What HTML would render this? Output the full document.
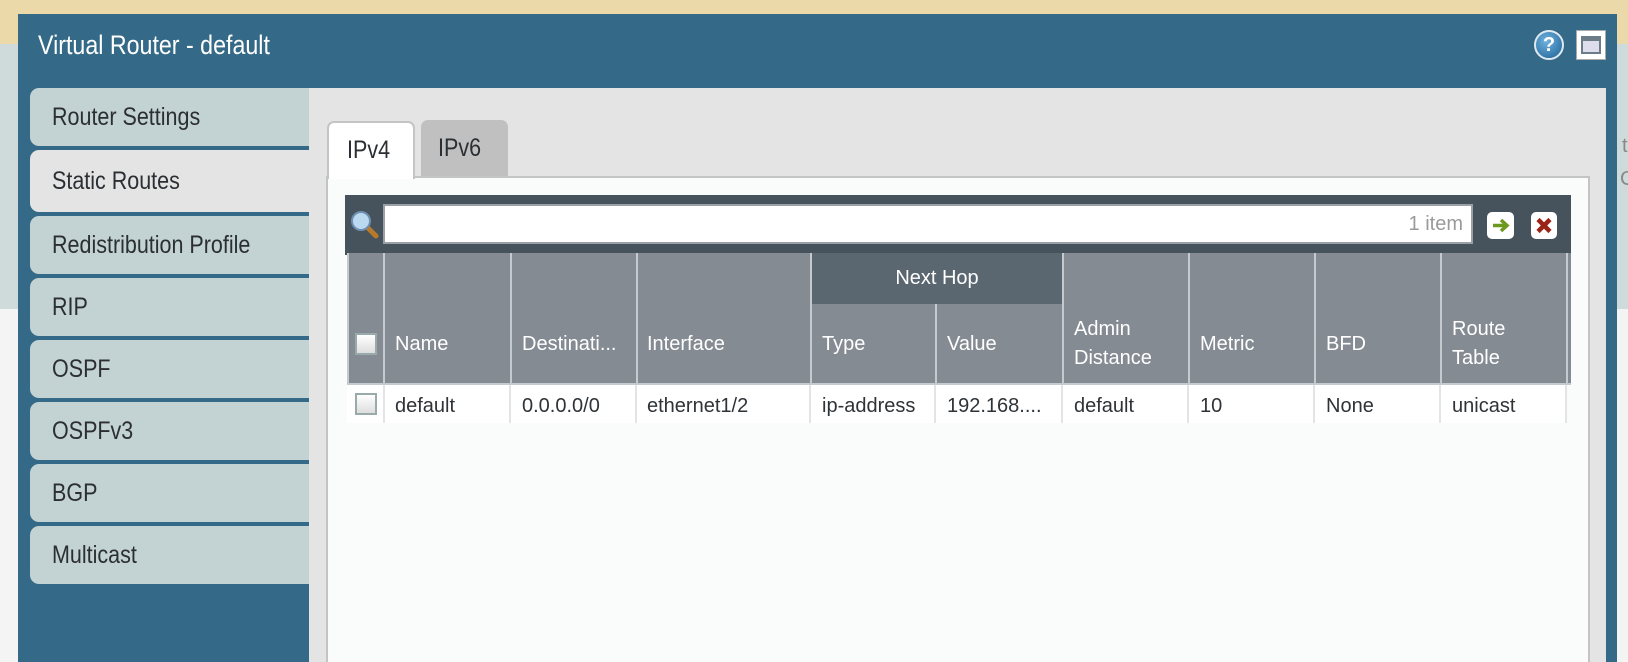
<!DOCTYPE html>
<html><head><meta charset="utf-8"><style>
*{margin:0;padding:0;box-sizing:border-box}
html,body{width:1628px;height:662px;overflow:hidden}
body{position:relative;background:#f4f4f4;font-family:"Liberation Sans",sans-serif}
.abs{position:absolute}
.tab{position:absolute;left:30px;width:279px;background:#c3d2d3;border-radius:9px 0 0 9px;color:#2b2f33;font-size:25px;padding-left:22px;display:flex;align-items:center}
.tab span{display:inline-block;transform:scaleX(.86);transform-origin:left center}
.hc{position:absolute;color:#fff;font-size:20px;line-height:30px}
.sep{position:absolute;width:2px;background:#c5cacf}
.rc{position:absolute;top:391px;color:#2e3338;font-size:20px;line-height:30px}
.rsep{position:absolute;top:385px;height:38px;width:2px;background:#e2e4e6}
</style></head><body>
<div class="abs" style="left:0;top:0;width:1628px;height:44px;background:#ecd9a9"></div>
<div class="abs" style="left:0;top:44px;width:1628px;height:265px;background:#cfdadb"></div>
<div class="abs" style="left:1622px;top:135px;color:#888;font-size:20px">t:</div>
<div class="abs" style="left:1620px;top:168px;color:#888;font-size:20px">Co</div>

<div class="abs" style="left:18px;top:14px;width:1599px;height:648px;background:#346a87"></div>
<div class="abs" style="left:38px;top:30px;color:#fff;font-size:27px;transform:scaleX(.86);transform-origin:left">Virtual Router - default</div>
<div class="abs" style="left:1534px;top:30px;width:30px;height:30px;border-radius:50%;background:radial-gradient(circle at 40% 35%,#6fb3e0,#1c5f94);border:2px solid #dfe9f0;color:#fff;font-weight:bold;font-size:20px;text-align:center;line-height:26px">?</div>
<div class="abs" style="left:1576px;top:30px;width:30px;height:30px;background:#fff;border:1px solid #aaa;padding:5px 4px"><div style="width:100%;height:100%;border:2px solid #6b7b88;border-top-width:5px;background:#dde"></div></div>

<div class="abs" style="left:309px;top:88px;width:1297px;height:574px;background:#e4e4e4"></div>

<div class="tab" style="top:88px;height:58px"><span>Router Settings</span></div>
<div class="tab" style="top:150px;height:62px;background:#e4e4e4"><span>Static Routes</span></div>
<div class="tab" style="top:216px;height:58px"><span>Redistribution Profile</span></div>
<div class="tab" style="top:278px;height:58px"><span>RIP</span></div>
<div class="tab" style="top:340px;height:58px"><span>OSPF</span></div>
<div class="tab" style="top:402px;height:58px"><span>OSPFv3</span></div>
<div class="tab" style="top:464px;height:58px"><span>BGP</span></div>
<div class="tab" style="top:526px;height:58px"><span>Multicast</span></div>

<div class="abs" style="left:326px;top:176px;width:1264px;height:486px;background:#fafbfb;border:2px solid #c4c4c4;border-bottom:none"></div>
<div class="abs" style="left:327px;top:121px;width:88px;height:58px;background:#fff;border:2px solid #c4c4c4;border-bottom:none;border-radius:7px 7px 0 0;font-size:25px;color:#2b2f33;padding:13px 0 0 18px"><span style="display:inline-block;transform:scaleX(.86);transform-origin:left">IPv4</span></div>
<div class="abs" style="left:421px;top:120px;width:87px;height:56px;background:#c0c0c0;border-radius:7px 7px 0 0;font-size:25px;color:#2b2f33;padding:14px 0 0 17px"><span style="display:inline-block;transform:scaleX(.86);transform-origin:left">IPv6</span></div>

<div class="abs" style="left:345px;top:195px;width:1226px;height:60px;background:#46535d"></div>
<svg class="abs" style="left:350px;top:210px" width="30" height="30"><line x1="16" y1="16" x2="26" y2="26" stroke="#b77a2a" stroke-width="5" stroke-linecap="round"/><circle cx="11" cy="11" r="9" fill="#bcd9f2" stroke="#6e8fb0" stroke-width="2"/></svg>
<div class="abs" style="left:383px;top:204px;width:1090px;height:40px;background:#fff;border:2px solid #9aa0a6;text-align:right;padding-right:8px;color:#9a9a9a;font-size:20px;line-height:36px">1 item</div>
<div class="abs" style="left:1487px;top:212px;width:27px;height:27px;background:#fff;border-radius:5px"></div>
<svg class="abs" style="left:1487px;top:212px" width="27" height="27"><path d="M6 13.5H19M14 8l6 5.5-6 5.5" stroke="#6d9a1e" stroke-width="3.5" fill="none"/></svg>
<div class="abs" style="left:1531px;top:212px;width:26px;height:27px;background:#fff;border-radius:5px"></div>
<svg class="abs" style="left:1531px;top:212px" width="26" height="27"><path d="M7 7.5l12 12M19 7.5l-12 12" stroke="#9a2418" stroke-width="4.5"/></svg>

<div class="abs" style="left:347px;top:253px;width:1224px;height:132px;background:#858b92"></div>
<div class="abs" style="left:811px;top:253px;width:252px;height:51px;background:#5a6670"></div>
<div class="hc" style="left:811px;top:263px;width:252px;text-align:center">Next Hop</div>
<div class="sep" style="left:347px;top:253px;height:132px"></div>
<div class="sep" style="left:383px;top:253px;height:132px"></div>
<div class="sep" style="left:510px;top:253px;height:132px"></div>
<div class="sep" style="left:636px;top:253px;height:132px"></div>
<div class="sep" style="left:810px;top:253px;height:132px"></div>
<div class="sep" style="left:935px;top:304px;height:81px"></div>
<div class="sep" style="left:1062px;top:253px;height:132px"></div>
<div class="sep" style="left:1188px;top:253px;height:132px"></div>
<div class="sep" style="left:1314px;top:253px;height:132px"></div>
<div class="sep" style="left:1440px;top:253px;height:132px"></div>
<div class="sep" style="left:1566px;top:253px;height:132px"></div>
<div class="abs" style="left:347px;top:383px;width:1224px;height:2px;background:#c5cacf"></div>

<div class="abs" style="left:355px;top:333px;width:22px;height:22px;background:linear-gradient(#fff,#ddd);border:2px solid #9aa"></div>
<div class="hc" style="left:395px;top:329px">Name</div>
<div class="hc" style="left:522px;top:329px">Destinati...</div>
<div class="hc" style="left:647px;top:329px">Interface</div>
<div class="hc" style="left:822px;top:329px">Type</div>
<div class="hc" style="left:947px;top:329px">Value</div>
<div class="hc" style="left:1074px;top:315px;line-height:29px">Admin<br>Distance</div>
<div class="hc" style="left:1200px;top:329px">Metric</div>
<div class="hc" style="left:1326px;top:329px">BFD</div>
<div class="hc" style="left:1452px;top:315px;line-height:29px">Route<br>Table</div>

<div class="abs" style="left:347px;top:385px;width:1220px;height:38px;background:#fff"></div>
<div class="abs" style="left:355px;top:393px;width:22px;height:22px;background:linear-gradient(#fff,#ddd);border:2px solid #9aa"></div>
<div class="rsep" style="left:383px"></div><div class="rsep" style="left:509px"></div><div class="rsep" style="left:635px"></div><div class="rsep" style="left:809px"></div><div class="rsep" style="left:934px"></div><div class="rsep" style="left:1061px"></div><div class="rsep" style="left:1187px"></div><div class="rsep" style="left:1313px"></div><div class="rsep" style="left:1439px"></div><div class="rsep" style="left:1565px"></div>
<div class="rc" style="left:395px">default</div>
<div class="rc" style="left:522px">0.0.0.0/0</div>
<div class="rc" style="left:647px">ethernet1/2</div>
<div class="rc" style="left:822px">ip-address</div>
<div class="rc" style="left:947px">192.168....</div>
<div class="rc" style="left:1074px">default</div>
<div class="rc" style="left:1200px">10</div>
<div class="rc" style="left:1326px">None</div>
<div class="rc" style="left:1452px">unicast</div>
</body></html>
